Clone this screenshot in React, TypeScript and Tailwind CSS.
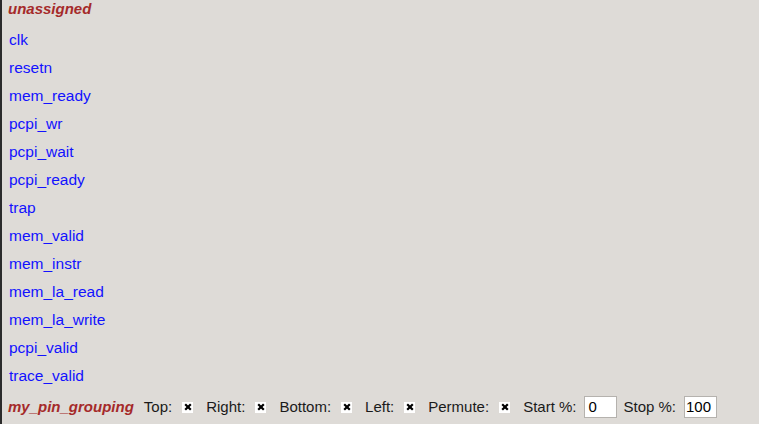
import React from "react";

const pins = [
  "clk",
  "resetn",
  "mem_ready",
  "pcpi_wr",
  "pcpi_wait",
  "pcpi_ready",
  "trap",
  "mem_valid",
  "mem_instr",
  "mem_la_read",
  "mem_la_write",
  "pcpi_valid",
  "trace_valid",
];

const Check: React.FC = () => (
  <span className="ml-[10px] mr-[13px] flex h-[11px] w-[11px] items-center justify-center bg-white">
    <svg width="8" height="8" viewBox="0 0 8 8">
      <path d="M1.2 1.2L6.8 6.8M6.8 1.2L1.2 6.8" stroke="#000" strokeWidth="2.2" />
    </svg>
  </span>
);

const App: React.FC = () => {
  return (
    <div
      className="flex h-[424px] w-[759px] flex-col overflow-hidden border-l-2 border-[#2b2b2b] bg-[#dedbd7] text-[15px]"
      style={{ fontFamily: '"Liberation Sans", Arial, sans-serif' }}
    >
      <div className="h-[26px] pl-[6px]">
        <span className="block leading-[18px] font-bold italic text-[#a52a2a]">unassigned</span>
      </div>
      <div className="flex flex-col">
        {pins.map((p) => (
          <div key={p} className="flex h-[28px] items-center pl-[7px] text-[15.5px] text-[#1212ff]">
            {p}
          </div>
        ))}
      </div>
      <div className="flex h-[34px] items-center pl-[6px] text-[#1a1a1a]">
        <span className="mr-[10px] font-bold italic text-[#a52a2a]">my_pin_grouping</span>
        <span>Top:</span>
        <Check />
        <span>Right:</span>
        <Check />
        <span>Bottom:</span>
        <Check />
        <span>Left:</span>
        <Check />
        <span>Permute:</span>
        <Check />
        <span>Start %:</span>
        <input
          readOnly
          value="0"
          className="ml-[8px] mr-[6px] h-[22px] w-[33px] border border-[#b5b2ae] bg-white px-[3px] text-[15px] text-black outline-none"
        />
        <span>Stop %:</span>
        <input
          readOnly
          value="100"
          className="ml-[8px] h-[22px] w-[33px] border border-[#b5b2ae] bg-white px-[1px] text-[15px] text-black outline-none"
        />
      </div>
    </div>
  );
};

export default App;
